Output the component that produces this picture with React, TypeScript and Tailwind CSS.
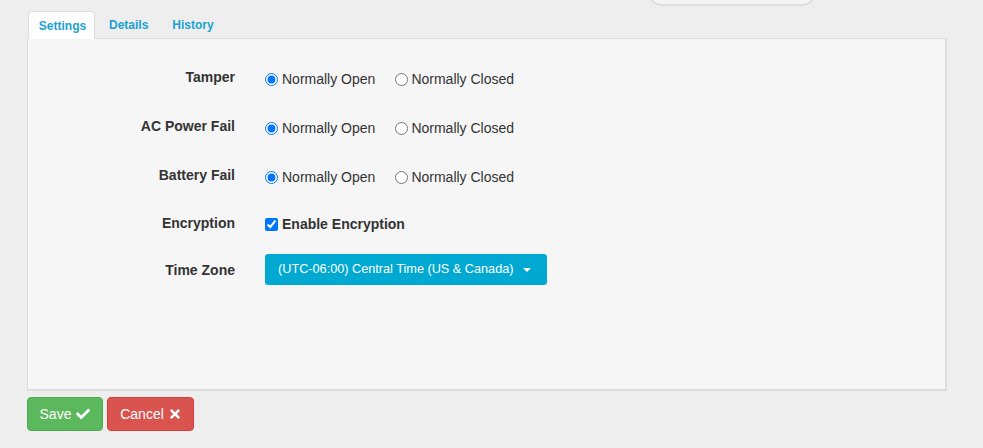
import React from "react";
import { FaCheck, FaTimes } from "react-icons/fa";

const font = { fontFamily: '"Liberation Sans", Arial, sans-serif' };

function RadioRow({ label, name }: { label: string; name: string }) {
  return (
    <div className="flex h-[49px] items-center">
      <div className="w-[207px] pb-[4px] text-right text-[14px] font-bold text-[#333]">{label}</div>
      <div className="ml-[30px] flex items-center text-[14px] text-[#333]">
        <label className="flex items-center">
          <input type="radio" name={name} defaultChecked className="m-0 mr-[4px] h-[13px] w-[13px] accent-[#0075ff]" />
          Normally Open
        </label>
        <label className="ml-[20px] flex items-center">
          <input type="radio" name={name} className="m-0 mr-[3px] h-[13px] w-[13px]" />
          Normally Closed
        </label>
      </div>
    </div>
  );
}

export default function App() {
  return (
    <div className="relative h-[448px] w-[983px] overflow-hidden bg-[#eeeeee]" style={font}>
      <div className="absolute left-[648px] top-[-30px] h-[36px] w-[168px] rounded-[14px] border-2 border-[#dedede] bg-[#f4f4f4]" />

      <div className="pl-[27px] pt-[11px]">
        <div className="flex text-[12px] font-bold text-[#1ba2cf]">
          <div className="relative z-10 ml-[1px] flex h-[28px] w-[67px] items-center justify-center rounded-t-[4px] border border-b-0 border-[#dddddd] bg-white pl-[2px]">
            Settings
          </div>
          <div className="flex h-[27px] items-center px-[14px]">Details</div>
          <div className="flex h-[27px] items-center px-[10px]">History</div>
        </div>

        <div className="-mt-px h-[353px] w-[920px] border border-r-2 border-b-2 border-[#dddddd] bg-[#f6f6f6] pt-[16px]">
          <RadioRow label="Tamper" name="tamper" />
          <RadioRow label="AC Power Fail" name="ac" />
          <RadioRow label="Battery Fail" name="battery" />

          <div className="flex h-[48px] items-center pb-[4px]">
            <div className="w-[207px] pb-[2px] text-right text-[14px] font-bold text-[#333]">Encryption</div>
            <label className="ml-[30px] flex items-center text-[14px] font-bold text-[#333]">
              <input type="checkbox" defaultChecked className="m-0 mr-[4px] h-[13px] w-[13px] accent-[#0075ff]" />
              Enable Encryption
            </label>
          </div>

          <div className="mt-[4px] flex h-[31px] items-center">
            <div className="w-[207px] pt-[2px] text-right text-[14px] font-bold text-[#333]">Time Zone</div>
            <div className="ml-[30px] flex h-[31px] w-[282px] items-center rounded-[3px] bg-[#00a9d2] pl-[13px] pr-[16px] text-[12.7px] text-white">
              <span className="whitespace-nowrap">(UTC-06:00) Central Time (US &amp; Canada)</span>
              <span className="ml-auto h-0 w-0 border-x-[4px] border-t-[4px] border-x-transparent border-t-white" />
            </div>
          </div>
        </div>

        <div className="mt-[6px] flex gap-[4px]">
          <button className="flex h-[34px] w-[76px] items-center justify-center gap-[5px] rounded-[4px] border border-[#4cae4c] bg-[#5cb85c] text-[14px] text-white">
            Save <FaCheck className="h-[14px] w-[14px]" />
          </button>
          <button className="flex h-[34px] w-[87px] items-center justify-center gap-[5px] rounded-[4px] border border-[#d43f3a] bg-[#d9534f] text-[14px] text-white">
            Cancel <FaTimes className="h-[14px] w-[12px]" />
          </button>
        </div>
      </div>
    </div>
  );
}
